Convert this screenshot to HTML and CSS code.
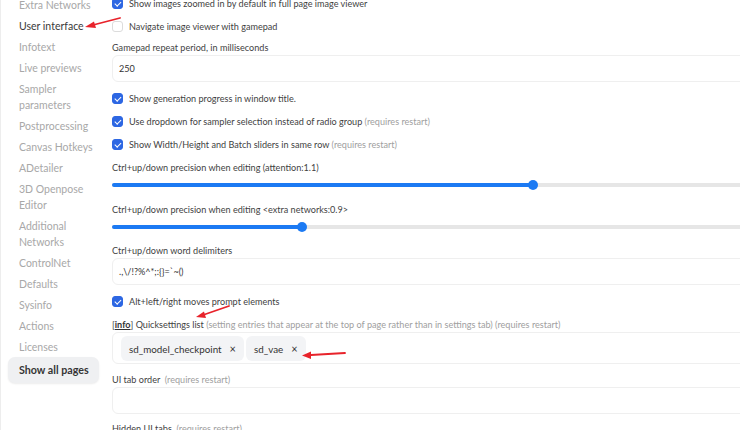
FILE: index.html
```html
<!DOCTYPE html>
<html>
<head>
<meta charset="utf-8">
<link rel="stylesheet" href="styles.css">
</head>
<body>
<div class="page">
  <nav class="sidebar">
    <div class="nav-item">Extra Networks</div>
    <div class="nav-item active">User interface</div>
    <div class="nav-item">Infotext</div>
    <div class="nav-item">Live previews</div>
    <div class="nav-item">Sampler parameters</div>
    <div class="nav-item">Postprocessing</div>
    <div class="nav-item">Canvas Hotkeys</div>
    <div class="nav-item">ADetailer</div>
    <div class="nav-item">3D Openpose Editor</div>
    <div class="nav-item">Additional Networks</div>
    <div class="nav-item">ControlNet</div>
    <div class="nav-item">Defaults</div>
    <div class="nav-item">Sysinfo</div>
    <div class="nav-item">Actions</div>
    <div class="nav-item">Licenses</div>
    <div class="nav-button">Show all pages</div>
  </nav>
  <main class="settings">
    <label class="check-row"><span class="box checked"></span><span>Show images zoomed in by default in full page image viewer</span></label>
    <label class="check-row"><span class="box"></span><span>Navigate image viewer with gamepad</span></label>
    <div class="field">
      <div class="field-label">Gamepad repeat period, in milliseconds</div>
      <div class="input">250</div>
    </div>
    <label class="check-row"><span class="box checked"></span><span>Show generation progress in window title.</span></label>
    <label class="check-row"><span class="box checked"></span><span>Use dropdown for sampler selection instead of radio group <span class="note">(requires restart)</span></span></label>
    <label class="check-row"><span class="box checked"></span><span>Show Width/Height and Batch sliders in same row <span class="note">(requires restart)</span></span></label>
    <div class="slider-field first">
      <div class="field-label">Ctrl+up/down precision when editing (attention:1.1)</div>
      <div class="slider"><div class="fill" style="width:421px"></div></div>
    </div>
    <div class="slider-field">
      <div class="field-label">Ctrl+up/down precision when editing &lt;extra networks:0.9&gt;</div>
      <div class="slider"><div class="fill" style="width:190px"></div></div>
    </div>
    <div class="field">
      <div class="field-label">Ctrl+up/down word delimiters</div>
      <div class="input">.,\/!?%^*;:{}=`~()</div>
    </div>
    <label class="check-row"><span class="box checked"></span><span>Alt+left/right moves prompt elements</span></label>
    <div class="field quick">
      <div class="field-label">[<u class="info">info</u>] Quicksettings list <span class="note">(setting entries that appear at the top of page rather than in settings tab) (requires restart)</span></div>
      <div class="input chips">
        <span class="chip">sd_model_checkpoint<span class="x">×</span></span>
        <span class="chip">sd_vae<span class="x">×</span></span>
      </div>
    </div>
    <div class="field tab-order">
      <div class="field-label">UI tab order&nbsp; <span class="note">(requires restart)</span></div>
      <div class="input"></div>
    </div>
    <div class="field">
      <div class="field-label">Hidden UI tabs&nbsp; <span class="note">(requires restart)</span></div>
      <div class="input"></div>
    </div>
  </main>
  <svg class="arrows" width="740" height="430" viewBox="0 0 740 430">
    <g stroke="#e8232b" stroke-width="1.8" fill="#e8232b" stroke-linecap="round">
      <line x1="120" y1="18" x2="93" y2="25"/>
      <polygon stroke="none" points="85,27 94,21.5 96,28"/>
      <line x1="229" y1="306" x2="203" y2="315"/>
      <polygon stroke="none" points="196,317 204,311.5 206,318"/>
      <line x1="345" y1="353" x2="311" y2="355"/>
      <polygon stroke="none" points="302,355.5 311,351.5 311,359"/>
    </g>
  </svg>
</div>
</body>
</html>
```

FILE: styles.css
```css
html, body {
  margin: 0;
  padding: 0;
  background: #ffffff;
  overflow: hidden;
}
body {
  font-family: Lato, "Liberation Sans", sans-serif;
  width: 740px;
  height: 430px;
  position: relative;
}
.page {
  display: flex;
  margin-top: -10px;
  border-left: 1px solid #ededed;
  min-height: 460px;
}
.sidebar {
  width: 91px;
  flex-shrink: 0;
  padding: 4px 4px 0 7px;
  display: flex;
  flex-direction: column;
}
.nav-item {
  font-size: 10.5px;
  line-height: 16px;
  padding: 2.5px 0 2.5px 11px;
  color: #a8a8a8;
}
.nav-item.active {
  color: #3a3a3a;
}
.nav-button {
  height: 26px;
  line-height: 26px;
  padding-left: 11px;
  border-radius: 7px;
  background: #eff0f2;
  box-shadow: 0 1px 2px rgba(0,0,0,0.08);
  font-size: 10.7px;
  font-weight: 700;
  color: #353535;
}
.settings {
  width: 700px;
  flex-shrink: 0;
  padding: 2px 0 0 9px;
  color: #3f3f3f;
  font-size: 9.1px;
}
.check-row {
  display: flex;
  align-items: center;
  height: 23px;
  white-space: nowrap;
}
.box {
  width: 11px;
  height: 11px;
  border-radius: 3px;
  border: 1px solid #dcdcdc;
  box-sizing: border-box;
  margin-right: 6px;
  flex-shrink: 0;
  background: #fff;
  position: relative;
}
.box.checked {
  background: #2d67e3;
  border-color: #2d67e3;
}
.box.checked::after {
  content: "";
  position: absolute;
  left: 3px;
  top: 1px;
  width: 2.5px;
  height: 5px;
  border: solid #fff;
  border-width: 0 1.5px 1.5px 0;
  transform: rotate(45deg);
}
.note {
  color: #a0a0a0;
}
.field {
  padding: 3px 0 5px;
}
.field.quick {
  padding-top: 5px;
}
.field.tab-order {
  padding-top: 4px;
}
.field-label {
  line-height: 14px;
  white-space: nowrap;
}
.info {
  color: #333;
  font-weight: 700;
}
.input {
  height: 27px;
  box-sizing: border-box;
  border: 1px solid #efefef;
  border-radius: 6px;
  padding: 0 6px;
  line-height: 25px;
  color: #333;
}
.chips {
  height: 32px;
  display: flex;
  align-items: center;
  gap: 2px;
  padding: 0 8px;
}
.chip {
  background: #f3f4f6;
  border-radius: 6px;
  padding: 0 8px;
  height: 25px;
  line-height: 25px;
  color: #333;
  font-size: 9.8px;
}
.chip .x {
  margin-left: 8px;
  font-size: 11px;
}
.slider-field {
  padding: 3px 0 4px;
}
.slider-field.first {
  padding-top: 4px;
}
.slider-field .field-label {
  line-height: 15px;
}
.slider {
  position: relative;
  height: 20px;
}
.slider::before {
  content: "";
  position: absolute;
  left: 0;
  right: 0;
  top: 8px;
  height: 4px;
  background: #e6e6e6;
  border-radius: 2px;
}
.fill {
  position: absolute;
  left: 0;
  top: 8px;
  height: 4px;
  background: #1c7af3;
  border-radius: 2px;
}
.fill::after {
  content: "";
  position: absolute;
  right: -5px;
  top: -3px;
  width: 10px;
  height: 10px;
  border-radius: 50%;
  background: #1c7af3;
}
.arrows {
  position: absolute;
  left: 0;
  top: 0;
  pointer-events: none;
}
```
